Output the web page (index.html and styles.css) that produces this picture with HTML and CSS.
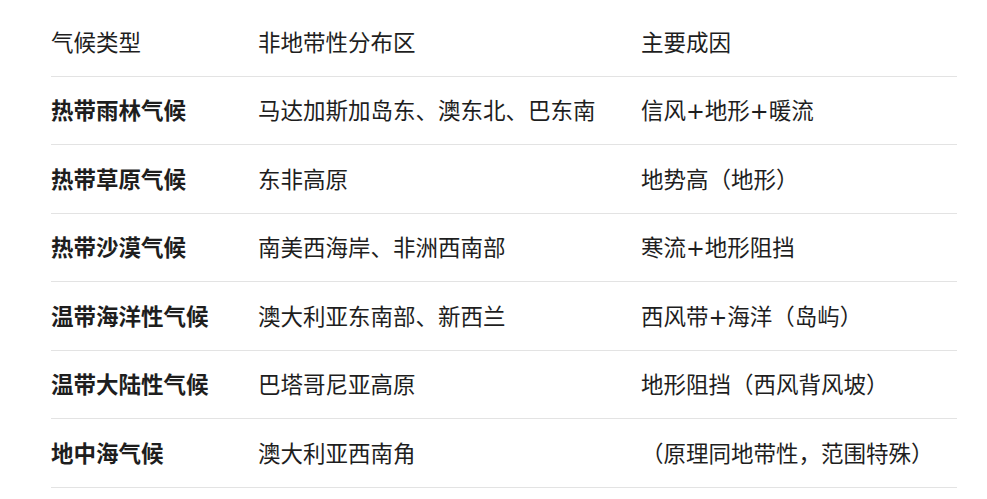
FILE: index.html
```html
<!DOCTYPE html>
<html lang="zh-CN">
<head>
<meta charset="utf-8">
<link rel="stylesheet" href="styles.css">
</head>
<body>
<table class="climate">
  <colgroup>
    <col class="c1"><col class="c2"><col class="c3">
  </colgroup>
  <thead>
    <tr><th>气候类型</th><th>非地带性分布区</th><th>主要成因</th></tr>
  </thead>
  <tbody>
    <tr><td class="name">热带雨林气候</td><td>马达加斯加岛东、澳东北、巴东南</td><td>信风+地形+暖流</td></tr>
    <tr><td class="name">热带草原气候</td><td>东非高原</td><td>地势高（地形）</td></tr>
    <tr><td class="name">热带沙漠气候</td><td>南美西海岸、非洲西南部</td><td>寒流+地形阻挡</td></tr>
    <tr><td class="name">温带海洋性气候</td><td>澳大利亚东南部、新西兰</td><td>西风带+海洋（岛屿）</td></tr>
    <tr><td class="name">温带大陆性气候</td><td>巴塔哥尼亚高原</td><td>地形阻挡（西风背风坡）</td></tr>
    <tr><td class="name">地中海气候</td><td>澳大利亚西南角</td><td>（原理同地带性，范围特殊）</td></tr>
  </tbody>
</table>
</body>
</html>
```
FILE: styles.css
```css
html, body {
  margin: 0;
  padding: 0;
  background: #ffffff;
}
body {
  padding: 8px 0 0 51px;
  font-family: "DejaVu Sans", "Noto Sans CJK SC", sans-serif;
  color: #1e1e1e;
}
.climate {
  width: 906px;
  border-collapse: collapse;
  table-layout: fixed;
  font-size: 22.5px;
}
.c1 { width: 207px; }
.c2 { width: 383px; }
.c3 { width: 316px; }
.climate th,
.climate td {
  text-align: left;
  font-weight: 400;
  padding: 2px 0 0 0;
  height: 65.5px;
  line-height: 30px;
  vertical-align: middle;
  border-bottom: 1px solid #e3e3e3;
  white-space: nowrap;
}
.climate td.name {
  font-weight: 700;
}
```
